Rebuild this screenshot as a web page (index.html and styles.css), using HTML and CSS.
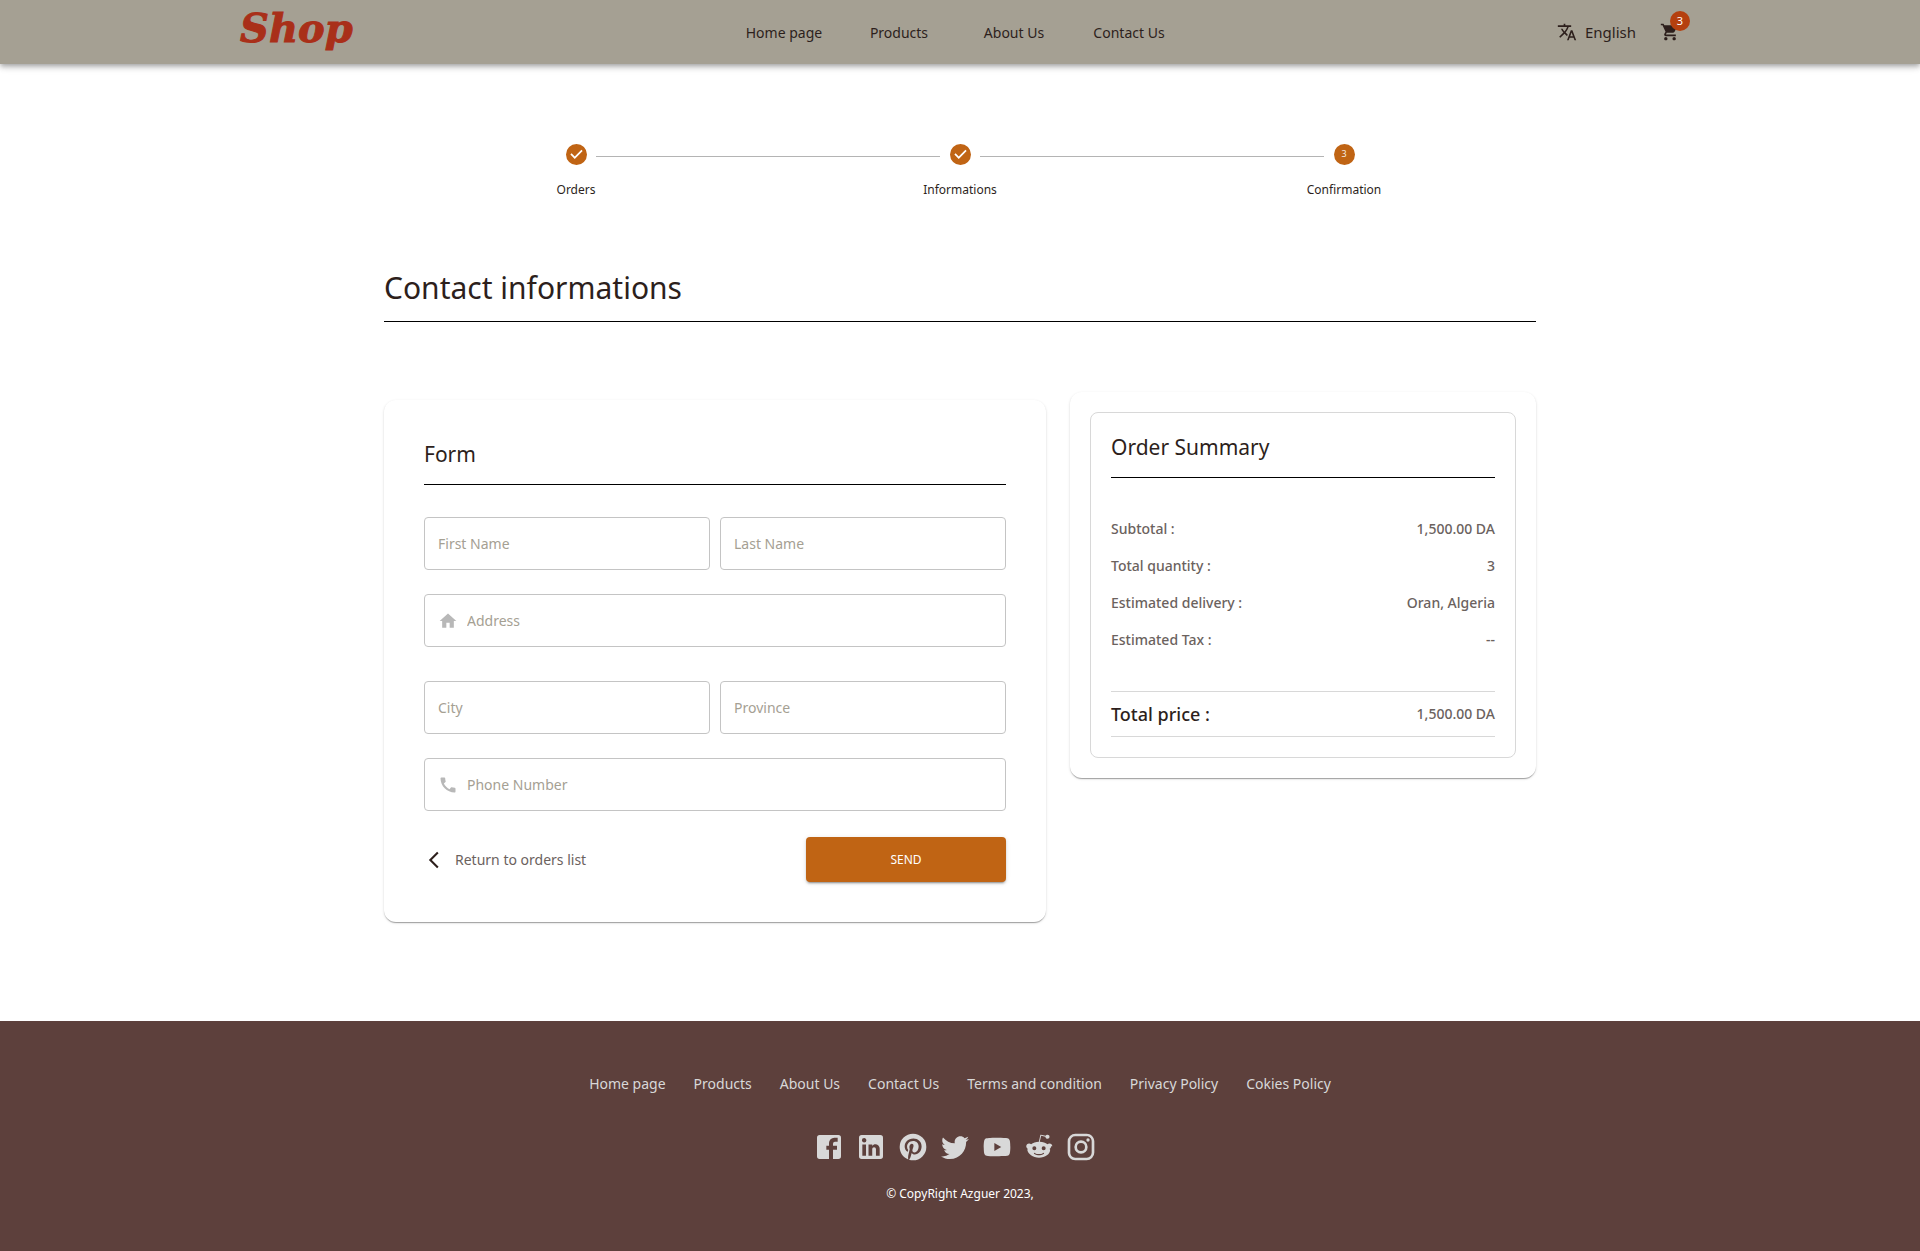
FILE: index.html
```html
<!DOCTYPE html>
<html lang="en">
<head>
<meta charset="utf-8">
<meta name="viewport" content="width=device-width, initial-scale=1">
<title>Shop - Contact informations</title>
<link rel="stylesheet" href="styles.css">
</head>
<body>
<header class="header">
  <div class="header-inner">
    <a class="logo" href="#">Shop</a>
    <nav class="main-nav" aria-label="Main">
      <a href="#">Home page</a>
      <a href="#">Products</a>
      <a href="#">About Us</a>
      <a href="#">Contact Us</a>
    </nav>
    <div class="tools">
      <button class="language" type="button">
        <svg class="icon-20" viewBox="0 0 24 24" aria-hidden="true"><path d="m12.87 15.07-2.54-2.51.03-.03c1.74-1.94 2.98-4.17 3.71-6.53H17V4h-7V2H8v2H1v1.99h11.17C11.5 7.92 10.44 9.75 9 11.35 8.07 10.32 7.3 9.19 6.69 8h-2c.73 1.63 1.73 3.17 2.98 4.56l-5.09 5.02L4 19l5-5 3.11 3.11.76-2.04zM18.5 10h-2L12 22h2l1.12-3h4.75L21 22h2l-4.5-12zm-2.62 7 1.62-4.33L19.12 17h-3.24z"/></svg>
        <span>English</span>
      </button>
      <button class="cart" type="button" aria-label="Cart">
        <svg class="icon-20" viewBox="0 0 24 24" aria-hidden="true"><path d="M7 18c-1.1 0-1.99.9-1.99 2S5.9 22 7 22s2-.9 2-2-.9-2-2-2zM1 2v2h2l3.6 7.59-1.35 2.45c-.16.28-.25.61-.25.96 0 1.1.9 2 2 2h12v-2H7.42c-.14 0-.25-.11-.25-.25l.03-.12.9-1.63h7.45c.75 0 1.41-.41 1.75-1.03l3.58-6.49c.08-.14.12-.31.12-.48 0-.55-.45-1-1-1H5.21l-.94-2H1zm16 16c-1.1 0-1.99.9-1.99 2s.89 2 1.99 2 2-.9 2-2-.9-2-2-2z"/></svg>
        <span class="badge">3</span>
      </button>
    </div>
  </div>
</header>

<main class="page">
  <ol class="stepper">
    <li class="step">
      <svg class="step-icon" viewBox="0 0 24 24" aria-hidden="true"><path d="M12 0a12 12 0 1 0 0 24 12 12 0 0 0 0-24zm-2 17l-5-5 1.4-1.4 3.6 3.6 7.6-7.6L19 8l-9 9z"/></svg>
      <span>Orders</span>
    </li>
    <li class="step">
      <svg class="step-icon" viewBox="0 0 24 24" aria-hidden="true"><path d="M12 0a12 12 0 1 0 0 24 12 12 0 0 0 0-24zm-2 17l-5-5 1.4-1.4 3.6 3.6 7.6-7.6L19 8l-9 9z"/></svg>
      <span>Informations</span>
    </li>
    <li class="step">
      <span class="step-icon step-number">3</span>
      <span>Confirmation</span>
    </li>
  </ol>

  <h1 class="page-title">Contact informations</h1>

  <div class="columns">
    <form class="card form-card">
      <h2 class="card-title">Form</h2>
      <div class="fields">
        <label class="field">
          <input type="text" placeholder="First Name" aria-label="First Name">
        </label>
        <label class="field">
          <input type="text" placeholder="Last Name" aria-label="Last Name">
        </label>
        <label class="field field-wide">
          <svg class="icon-20" viewBox="0 0 24 24" aria-hidden="true"><path d="M10 20v-6h4v6h5v-8h3L12 3 2 12h3v8z"/></svg>
          <input type="text" placeholder="Address" aria-label="Address">
        </label>
      </div>
      <div class="fields">
        <label class="field">
          <input type="text" placeholder="City" aria-label="City">
        </label>
        <label class="field">
          <input type="text" placeholder="Province" aria-label="Province">
        </label>
        <label class="field field-wide">
          <svg class="icon-20" viewBox="0 0 24 24" aria-hidden="true"><path d="M20.01 15.38c-1.23 0-2.42-.2-3.53-.56-.35-.12-.74-.03-1.01.24l-1.57 1.97c-2.83-1.35-5.48-3.9-6.89-6.83l1.95-1.66c.27-.28.35-.67.24-1.02-.37-1.11-.56-2.3-.56-3.53 0-.54-.45-.99-.99-.99H4.19C3.65 3 3 3.24 3 3.99 3 13.28 10.73 21 20.01 21c.71 0 .99-.63.99-1.18v-3.45c0-.54-.45-.99-.99-.99z"/></svg>
          <input type="tel" placeholder="Phone Number" aria-label="Phone Number">
        </label>
      </div>
      <div class="actions">
        <a class="back" href="#">
          <svg class="icon-20" viewBox="0 0 24 24" aria-hidden="true"><path d="M17.51 3.87 15.73 2.1 5.84 12l9.9 9.9 1.77-1.77L9.38 12z"/></svg>
          <span>Return to orders list</span>
        </a>
        <button class="send" type="submit">SEND</button>
      </div>
    </form>

    <section class="card summary-card">
      <div class="summary">
        <h2 class="card-title">Order Summary</h2>
        <dl class="rows">
          <div class="row"><dt>Subtotal :</dt><dd>1,500.00 DA</dd></div>
          <div class="row"><dt>Total quantity :</dt><dd>3</dd></div>
          <div class="row"><dt>Estimated delivery :</dt><dd>Oran, Algeria</dd></div>
          <div class="row"><dt>Estimated Tax :</dt><dd>--</dd></div>
          <div class="row total"><dt>Total price :</dt><dd>1,500.00 DA</dd></div>
        </dl>
      </div>
    </section>
  </div>
</main>

<footer class="footer">
  <nav class="footer-nav" aria-label="Footer">
    <a href="#">Home page</a>
    <a href="#">Products</a>
    <a href="#">About Us</a>
    <a href="#">Contact Us</a>
    <a href="#">Terms and condition</a>
    <a href="#">Privacy Policy</a>
    <a href="#">Cokies Policy</a>
  </nav>
  <div class="social">
    <a href="#" aria-label="Facebook"><svg viewBox="0 0 24 24"><path d="M5 3h14a2 2 0 0 1 2 2v14a2 2 0 0 1-2 2h-4v-7h3v-3h-3V9.500A1.500 1.500 0 0 1 16.500 8H18.500V5H16a4 4 0 0 0-4 4v2h-2v3h2v7H5a2 2 0 0 1-2-2V5a2 2 0 0 1 2-2z"/></svg></a>
    <a href="#" aria-label="LinkedIn"><svg viewBox="0 0 24 24"><path d="M19 3a2 2 0 0 1 2 2v14a2 2 0 0 1-2 2H5a2 2 0 0 1-2-2V5a2 2 0 0 1 2-2h14m-.5 15.500v-5.300a3.260 3.260 0 0 0-3.260-3.260c-.85 0-1.840.52-2.320 1.300v-1.110h-2.790v8.370h2.790v-4.930c0-.77.62-1.400 1.390-1.400a1.400 1.400 0 0 1 1.400 1.400v4.930h2.790M6.880 8.560a1.680 1.680 0 0 0 1.680-1.680c0-.93-.75-1.690-1.680-1.690a1.690 1.690 0 0 0-1.690 1.690c0 .93.76 1.680 1.690 1.680m1.390 9.940v-8.370H5.500v8.370h2.770z"/></svg></a>
    <a href="#" aria-label="Pinterest"><svg viewBox="0 0 24 24"><path d="M9.040 21.540c.96.29 1.930.46 2.960.46a10 10 0 0 0 10-10A10 10 0 0 0 12 2 10 10 0 0 0 2 12c0 4.250 2.670 7.900 6.440 9.340-.09-.78-.18-2.070 0-2.960l1.150-4.940s-.29-.58-.29-1.500c0-1.380.86-2.410 1.840-2.410.86 0 1.260.63 1.260 1.440 0 .86-.57 2.090-.86 3.270-.17.98.52 1.840 1.520 1.840 1.780 0 3.160-1.900 3.160-4.580 0-2.400-1.720-4.040-4.190-4.040-2.820 0-4.480 2.100-4.480 4.310 0 .86.28 1.730.74 2.300.09.06.09.14.06.29l-.29 1.090c0 .17-.11.23-.28.11-1.280-.56-2.020-2.380-2.020-3.850 0-3.160 2.240-6.030 6.560-6.030 3.440 0 6.120 2.470 6.120 5.750 0 3.440-2.130 6.200-5.180 6.200-.97 0-1.920-.52-2.260-1.130l-.67 2.370c-.23.86-.86 2.010-1.290 2.700z"/></svg></a>
    <a href="#" aria-label="Twitter"><svg viewBox="0 0 24 24"><path d="M22.460 6c-.77.35-1.600.58-2.460.69.88-.53 1.560-1.370 1.880-2.380-.83.5-1.750.85-2.720 1.050C18.370 4.500 17.260 4 16 4c-2.350 0-4.270 1.920-4.270 4.290 0 .34.04.67.11.98C8.280 9.090 5.110 7.380 3 4.790c-.37.63-.58 1.370-.58 2.150 0 1.490.75 2.810 1.910 3.560-.71 0-1.370-.2-1.950-.5v.03c0 2.080 1.480 3.820 3.440 4.210a4.220 4.220 0 0 1-1.930.07 4.280 4.280 0 0 0 4 2.980 8.521 8.521 0 0 1-5.330 1.840c-.34 0-.68-.02-1.020-.06C3.440 20.290 5.700 21 8.120 21 16 21 20.330 14.460 20.330 8.790c0-.19 0-.37-.01-.56.84-.6 1.560-1.360 2.140-2.230z"/></svg></a>
    <a href="#" aria-label="YouTube"><svg viewBox="0 0 24 24"><path d="M10 15l5.190-3L10 9v6m11.560-7.830c.13.47.22 1.100.28 1.900.07.8.1 1.490.1 2.090L22 12c0 2.190-.16 3.800-.44 4.830-.25.9-.83 1.480-1.730 1.730-.47.13-1.330.22-2.650.28-1.300.07-2.490.1-3.590.1L12 19c-4.190 0-6.800-.16-7.830-.44-.9-.25-1.480-.83-1.730-1.730-.13-.47-.22-1.100-.28-1.900-.07-.8-.1-1.490-.1-2.090L2 12c0-2.190.16-3.800.44-4.830.25-.9.83-1.480 1.730-1.730.47-.13 1.330-.22 2.650-.28 1.300-.07 2.490-.1 3.590-.1L12 5c4.190 0 6.800.16 7.830.44.9.25 1.480.83 1.730 1.730z"/></svg></a>
    <a href="#" aria-label="Reddit"><svg viewBox="0 0 24 24"><path fill-rule="evenodd" d="M22 11.500c0-1.200-.95-2.150-2.150-2.150-.6 0-1.120.22-1.500.6-1.470-1.060-3.500-1.740-5.750-1.830l1-4.500 3.200.7a1.540 1.540 0 1 0 .17-.75l-3.550-.77c-.1 0-.2 0-.28.06a.4.4 0 0 0-.17.25l-1.090 5.010c-2.280.06-4.330.74-5.800 1.830a2.150 2.150 0 0 0-1.500-.6c-1.200 0-2.150.95-2.150 2.150 0 .88.540 1.640 1.270 1.970-.4.220-.5.430-.5.650C3.650 17.340 7.400 20 12.020 20s8.370-2.640 8.370-5.880c0-.22 0-.43-.5-.65.730-.33 1.230-1.090 1.230-1.970zM7 13a1.500 1.500 0 1 1 3 0 1.500 1.500 0 0 1-3 0zm8.700 4c-1 1-3 1.120-3.700 1.120S9.300 18 8.300 17a.4.4 0 0 1 .57-.57c.66.66 2.080.9 3.130.9s2.450-.24 3.130-.9a.4.4 0 0 1 .57.57zm-.2-2.500a1.500 1.500 0 1 1 0-3 1.500 1.500 0 0 1 0 3z"/></svg></a>
    <a href="#" aria-label="Instagram"><svg viewBox="0 0 24 24"><path d="M7.800 2h8.400C19.400 2 22 4.600 22 7.800v8.400a5.800 5.800 0 0 1-5.800 5.800H7.800C4.600 22 2 19.400 2 16.200V7.800A5.800 5.800 0 0 1 7.800 2m-.2 2A3.600 3.600 0 0 0 4 7.600v8.800C4 18.390 5.610 20 7.600 20h8.800a3.600 3.600 0 0 0 3.600-3.600V7.600C20 5.610 18.390 4 16.400 4H7.600m9.650 1.500a1.250 1.250 0 1 1 0 2.500 1.250 1.250 0 0 1 0-2.500M12 7a5 5 0 1 1 0 10 5 5 0 0 1 0-10m0 2a3 3 0 1 0 0 6 3 3 0 0 0 0-6z"/></svg></a>
  </div>
  <p class="copyright">© CopyRight Azguer 2023,</p>
</footer>
</body>
</html>
```
FILE: styles.css
```css
* {
  box-sizing: border-box;
}

:root {
  --ink: #2d1f1c;
  --muted: #6b625e;
  --line: #d8d8d8;
  --accent: #c06414;
}

body {
  margin: 0;
  min-height: 100vh;
  display: flex;
  flex-direction: column;
  background: #fff;
  color: var(--ink);
  font-family: "Noto Sans", "Open Sans", sans-serif;
  font-size: 14px;
  line-height: 20px;
}

a {
  color: inherit;
  text-decoration: none;
}

button,
input {
  font: inherit;
  color: inherit;
}

button {
  padding: 0;
  border: 0;
  background: none;
  cursor: pointer;
}

h1,
h2,
p,
ol,
dl,
dd {
  margin: 0;
  padding: 0;
}

.icon-20 {
  width: 20px;
  height: 20px;
  flex: none;
  fill: currentColor;
}

/* Header */

.header {
  background: #a5a093;
  box-shadow: 0 2px 4px -1px rgba(0, 0, 0, 0.2), 0 4px 5px rgba(0, 0, 0, 0.14),
    0 1px 10px rgba(0, 0, 0, 0.12);
}

.header-inner {
  width: 75%;
  min-height: 64px;
  margin: 0 auto;
  display: flex;
  align-items: center;
  justify-content: space-between;
}

.logo {
  width: 116px;
  padding-bottom: 8px;
  color: #a92f19;
  font-family: "DejaVu Serif", serif;
  font-size: 40px;
  font-style: italic;
  font-weight: 700;
  line-height: 40px;
  -webkit-text-stroke: 1px #a92f19;
}

.main-nav {
  display: grid;
  grid-template-columns: repeat(4, 115px);
  padding-top: 2px;
  text-align: center;
}

.tools {
  display: flex;
  align-items: center;
  gap: 24px;
}

.language {
  display: flex;
  align-items: center;
  gap: 8px;
  font-size: 15px;
}

.cart {
  position: relative;
  display: flex;
}

.badge {
  position: absolute;
  top: -11px;
  right: -10px;
  width: 20px;
  height: 20px;
  border-radius: 50%;
  background: #b5400f;
  color: #fff;
  font-size: 11px;
}

/* Main */

.page {
  width: 60%;
  margin: 0 auto;
  padding: 80px 0 99px;
}

.stepper {
  display: grid;
  grid-template-columns: repeat(3, 1fr);
  list-style: none;
}

.step {
  position: relative;
  display: flex;
  flex-direction: column;
  align-items: center;
  gap: 15px;
  font-size: 12px;
}

.step + .step::before {
  content: "";
  position: absolute;
  top: 12px;
  left: calc(-50% + 20px);
  right: calc(50% + 20px);
  border-top: 1px solid #b4b4b4;
}

.step-icon {
  width: 21px;
  height: 21px;
  fill: var(--accent);
}

.step-number {
  border-radius: 50%;
  background: var(--accent);
  color: #f4ece4;
  font-size: 9px;
  text-align: center;
}

.page-title {
  margin-top: 68px;
  padding-bottom: 13px;
  border-bottom: 1px solid #000;
  font-size: 30px;
  font-weight: 400;
  line-height: 40px;
}

.columns {
  display: grid;
  grid-template-columns: repeat(12, 1fr);
  align-items: start;
  gap: 24px;
  margin-top: 70px;
}

.card {
  border-radius: 12px;
  background: #fff;
  box-shadow: 0 2px 1px -1px rgba(0, 0, 0, 0.2), 0 1px 1px rgba(0, 0, 0, 0.14),
    0 1px 3px rgba(0, 0, 0, 0.12);
}

.card-title {
  padding-bottom: 16px;
  border-bottom: 1px solid #000;
  font-size: 21px;
  font-weight: 400;
  line-height: 28px;
}

.form-card {
  grid-column: span 7;
  margin-top: 8px;
  padding: 40px;
}

.fields {
  display: grid;
  grid-template-columns: 1fr 1fr;
  gap: 24px 10px;
  margin-top: 32px;
}

.fields + .fields {
  margin-top: 34px;
}

.field {
  display: flex;
  align-items: center;
  gap: 9px;
  height: 53px;
  padding: 0 13px;
  border: 1px solid #c4c4c4;
  border-radius: 4px;
  color: #b8b8b8;
}

.field:focus-within {
  border-color: var(--accent);
}

.field-wide {
  grid-column: 1 / -1;
}

.field input {
  flex: 1;
  min-width: 0;
  padding: 0;
  border: 0;
  outline: 0;
  background: none;
  color: var(--ink);
}

.field input::placeholder {
  color: #a5a093;
  opacity: 1;
}

.actions {
  display: flex;
  align-items: center;
  justify-content: space-between;
  margin-top: 26px;
}

.back {
  display: flex;
  align-items: center;
  gap: 11px;
  color: var(--muted);
}

.back svg {
  color: var(--ink);
}

.send {
  width: 200px;
  height: 45px;
  border-radius: 4px;
  background: var(--accent);
  color: #fff;
  font-size: 12px;
  box-shadow: 0 3px 1px -2px rgba(0, 0, 0, 0.2), 0 2px 2px rgba(0, 0, 0, 0.14),
    0 1px 5px rgba(0, 0, 0, 0.12);
}

.summary-card {
  grid-column: span 5;
  padding: 20px;
}

.summary {
  padding: 20px;
  border: 1px solid var(--line);
  border-radius: 8px;
}

.rows {
  display: flex;
  flex-direction: column;
  gap: 17px;
  margin-top: 41px;
  color: var(--muted);
  font-weight: 500;
}

.row {
  display: flex;
  align-items: center;
  justify-content: space-between;
}

.total {
  margin-top: 24px;
  padding: 10px 0;
  border: 1px solid var(--line);
  border-width: 1px 0;
}

.total dt {
  color: var(--ink);
  font-size: 18px;
  line-height: 24px;
}

/* Footer */

.footer {
  flex: 1;
  display: flex;
  flex-direction: column;
  align-items: center;
  padding: 53px 24px 48px;
  background: #5d403c;
  color: #d8d8d8;
}

.footer-nav {
  display: flex;
  flex-wrap: wrap;
  justify-content: center;
  gap: 28px;
}

.social {
  display: flex;
  gap: 10px;
  margin-top: 37px;
  padding-right: 10px;
}

.social svg {
  display: block;
  width: 32px;
  height: 32px;
  fill: currentColor;
}

.copyright {
  margin-top: 21px;
  color: #fff;
  font-size: 12px;
}
```
